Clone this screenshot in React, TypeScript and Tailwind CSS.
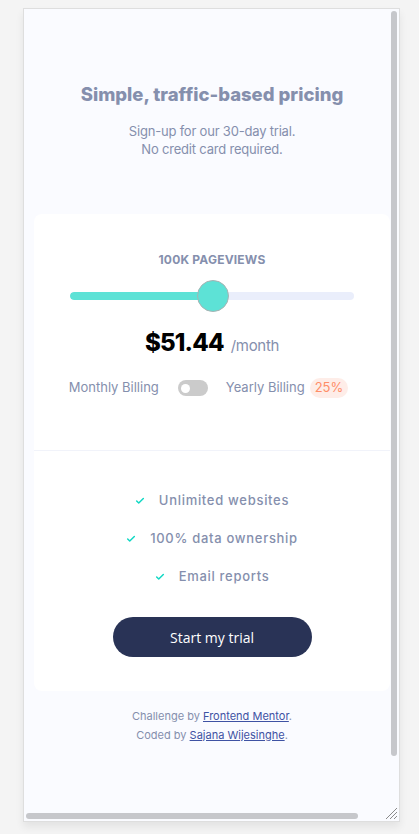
import { Check } from "lucide-react";

const features = ["Unlimited websites", "100% data ownership", "Email reports"];

export default function App() {
  return (
    <div className="w-full h-[834px] bg-[#f4f4f4] pt-2 pl-[23px] font-['Inter',_'Liberation_Sans',_sans-serif]">
      {/* framed preview */}
      <div className="relative w-[377px] h-[814px] border border-[#dedede] bg-[#fafbff] overflow-hidden shadow-[0_5px_8px_rgba(0,0,0,0.07)]">
        <div className="flex flex-col items-center pl-[10px] pr-[9px] pt-[73px]">
          <h1 className="text-[18.5px] leading-[24px] font-extrabold text-[#858fad]">
            Simple, traffic-based pricing
          </h1>
          <p className="mt-[16px] text-[13px] leading-[18px] text-[#858fad] text-center tracking-[-0.2px]">
            Sign-up for our 30-day trial.
            <br />
            No credit card required.
          </p>

          {/* card */}
          <div className="mt-[56px] w-full bg-white rounded-[8px] flex flex-col">
            <div className="flex flex-col items-center pt-[38px] pb-[52px] border-b border-[#f1f3fa]">
              <div className="text-[12px] leading-[16px] font-bold tracking-[0.2px] text-[#858fad]">
                100K PAGEVIEWS
              </div>

              <div className="mt-[12px] w-full px-[36px]">
                <div className="relative h-8 flex items-center">
                  <div className="w-full h-2 rounded-full bg-[#eaeefb] overflow-hidden">
                    <div className="h-full w-1/2 bg-[#5de2d6] rounded-full" />
                  </div>
                  <div className="absolute left-[127px] top-0 w-8 h-8 rounded-full bg-[#5de2d6] border border-[#a9b3b3]" />
                </div>
              </div>

              <div className="mt-[15px] flex items-baseline gap-[7px]">
                <span className="text-[24px] leading-[32px] font-extrabold tracking-[-0.8px] text-black">$51.44</span>
                <span className="text-[15px] tracking-[-0.3px] text-[#858fad]">/month</span>
              </div>

              <div className="mt-[19px] h-5 flex items-center pr-[7px] text-[13px] text-[#858fad]">
                <span>Monthly Billing</span>
                <div className="ml-[19px] w-[30px] h-[16px] rounded-full bg-[#cbcbcb] flex items-center pl-[3px]">
                  <div className="w-[9px] h-[9px] rounded-full bg-white" />
                </div>
                <span className="ml-[18px]">Yearly Billing</span>
                <span className="ml-[5px] px-[5px] h-[20px] flex items-center rounded-full bg-[#feede8] text-[#ff8d68] text-[13px]">
                  25%
                </span>
              </div>
            </div>

            <div className="flex flex-col items-center pt-[40px] pb-[34px]">
              <ul className="flex flex-col items-center gap-[18px]">
                {features.map((f) => (
                  <li key={f} className="h-5 flex items-center gap-[14px] text-[13px] font-medium tracking-[0.7px] text-[#858fad]">
                    <Check className="w-[10px] h-[10px] text-[#10d8c4]" strokeWidth={3.5} />
                    <span>{f}</span>
                  </li>
                ))}
              </ul>
              <button className="mt-[30px] w-[199px] h-[40px] rounded-full bg-[#293356] text-white text-[14px] font-['Open_Sans',_sans-serif]">
                Start my trial
              </button>
            </div>
          </div>

          <div className="mt-[16px] text-[11px] leading-[19px] text-[#858fad] text-center">
            <p>
              Challenge by{" "}
              <a href="#" className="text-[#3e52a3] underline">
                Frontend Mentor
              </a>
              .
            </p>
            <p>
              Coded by{" "}
              <a href="#" className="text-[#3e52a3] underline">
                Sajana Wijesinghe
              </a>
              .
            </p>
          </div>
        </div>

        {/* fake scrollbars + resize grip */}
        <div className="absolute right-[2px] top-[2px] w-[6px] h-[745px] rounded-full bg-[#c6c7cb]" />
        <div className="absolute left-[2px] bottom-[2px] w-[332px] h-[6px] rounded-full bg-[#c6c7cb]" />
        <svg className="absolute right-[1px] bottom-[1px]" width="13" height="13" viewBox="0 0 13 13">
          <path d="M1 12L12 1M5 12L12 5M9 12L12 9" stroke="#8a8a8a" strokeWidth="1" />
        </svg>
      </div>
    </div>
  );
}
